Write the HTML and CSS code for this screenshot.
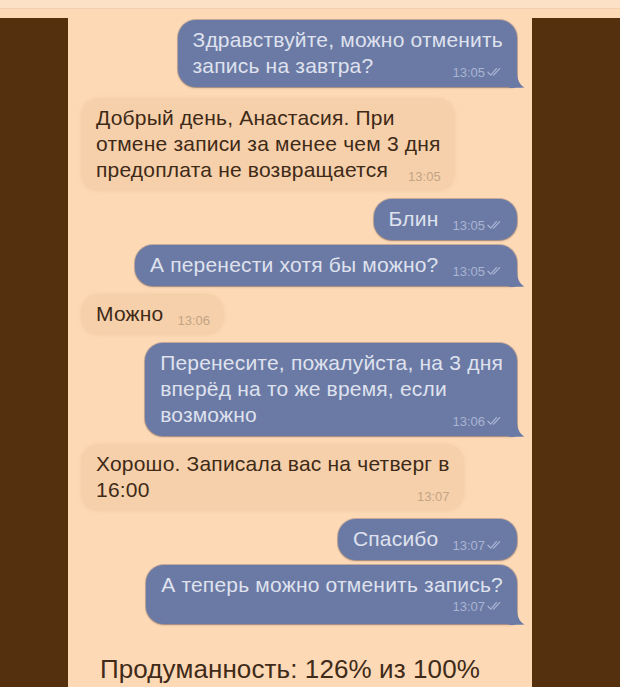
FILE: index.html
```html
<!DOCTYPE html>
<html lang="ru">
<head>
  <meta charset="UTF-8" />
  <meta name="viewport" content="width=device-width, initial-scale=1.0"/>
  <title>Переписка</title>
  <link rel="stylesheet" href="styles.css">
</head>
<body>

<div class="screen">
  <div class="topbar"></div>

  <div class="frame">
    <div class="side side-left"></div>

    <main class="chat">
      <div class="msg out tail">Здравствуйте, можно отменить<br>запись на завтра?<span class="time">13:05<svg class="ticks" viewBox="0 0 16 10"><path d="M1 5.2l2.8 2.9L9.4 1.6M6.6 8.1l6-6.5"/></svg></span></div>

      <div class="msg in first">Добрый день, Анастасия. При<br>отмене записи за менее чем 3 дня<br>предоплата не возвращается<span class="time">13:05</span></div>

      <div class="msg out">Блин<span class="time">13:05<svg class="ticks" viewBox="0 0 16 10"><path d="M1 5.2l2.8 2.9L9.4 1.6M6.6 8.1l6-6.5"/></svg></span></div>
      <div class="msg out tail">А перенести хотя бы можно?<span class="time">13:05<svg class="ticks" viewBox="0 0 16 10"><path d="M1 5.2l2.8 2.9L9.4 1.6M6.6 8.1l6-6.5"/></svg></span></div>

      <div class="msg in">Можно<span class="time">13:06</span></div>

      <div class="msg out tail">Перенесите, пожалуйста, на 3 дня<br>вперёд на то же время, если<br>возможно<span class="time">13:06<svg class="ticks" viewBox="0 0 16 10"><path d="M1 5.2l2.8 2.9L9.4 1.6M6.6 8.1l6-6.5"/></svg></span></div>

      <div class="msg in">Хорошо. Записала вас на четверг в<br>16:00<span class="time">13:07</span></div>

      <div class="msg out">Спасибо<span class="time">13:07<svg class="ticks" viewBox="0 0 16 10"><path d="M1 5.2l2.8 2.9L9.4 1.6M6.6 8.1l6-6.5"/></svg></span></div>
      <div class="msg out tail">А теперь можно отменить запись?<span class="time time-row">13:07<svg class="ticks" viewBox="0 0 16 10"><path d="M1 5.2l2.8 2.9L9.4 1.6M6.6 8.1l6-6.5"/></svg></span></div>

      <p class="caption">Продуманность: 126% из 100%</p>
    </main>

    <div class="side side-right"></div>
  </div>
</div>

</body>
</html>
```

FILE: styles.css
```css
  html, body {
    margin: 0;
    height: 100%;
  }

  body {
    font-family: "Liberation Sans", Arial, sans-serif;
    background: #fdd9b6;
    color: #3e2a18;
  }

  .screen {
    display: flex;
    flex-direction: column;
    height: 100vh;
    overflow: hidden;
  }

  .topbar {
    height: 8px;
    margin-bottom: 9px;
    background: #fde1c7;
    border-bottom: 1px solid #f3d0b2;
  }

  .frame {
    flex: 1;
    display: flex;
  }

  .side {
    background: #55300e;
  }

  .side-left {
    width: 68px;
  }

  .side-right {
    width: 88px;
  }

  .chat {
    flex: 1;
    display: flex;
    flex-direction: column;
    padding: 2px 15px 0 13px;
  }

  /* пузыри сообщений */
  .msg {
    position: relative;
    display: flow-root;
    padding: 7px 14px 8px 15px;
    font-size: 21px;
    line-height: 26px;
    letter-spacing: 0.2px;
    white-space: nowrap;
    border-radius: 18px;
  }

  .msg + .msg {
    margin-top: 8px;
  }

  .msg.first {
    margin-top: 11px;
  }

  .out + .out {
    margin-top: 5px;
  }

  .out {
    align-self: flex-end;
    background: #6b7aa5;
    color: #dfe2ee;
    box-shadow: 0 0 0 1px rgba(72, 70, 100, 0.3), 0 1px 2px rgba(70, 40, 20, 0.3);
  }

  .in {
    align-self: flex-start;
    background: #f6d0aa;
    color: #3e2a18;
    box-shadow: 0 0 3px 1px rgba(246, 208, 170, 0.9);
  }

  /* хвостик у последнего сообщения в группе */
  .out.tail {
    border-bottom-right-radius: 6px;
  }

  .out.tail::before {
    content: "";
    position: absolute;
    right: -8px;
    bottom: -1px;
    width: 16px;
    height: 16px;
    background: #6b7aa5;
    clip-path: path("M0 0 L8 0 C8 7 10 12 15.5 15.6 C11 16 5 16 0 16 Z");
  }

  .time {
    float: right;
    position: relative;
    top: 7px;
    margin-left: 14px;
    font-size: 13px;
    line-height: 26px;
    letter-spacing: 0;
    color: #c3a486;
  }

  .out .time {
    color: #a9b4d3;
  }

  .time-row {
    float: none;
    display: block;
    top: 0;
    line-height: 18px;
    text-align: right;
  }

  .ticks {
    width: 16px;
    height: 10px;
    margin-left: 2px;
    fill: none;
    stroke: currentColor;
    stroke-width: 1.3;
    stroke-linecap: round;
    stroke-linejoin: round;
  }

  .caption {
    margin: 30px 0 0 19px;
    font-size: 26px;
    line-height: 30px;
    letter-spacing: 0.1px;
    color: #3f2b19;
  }
```
